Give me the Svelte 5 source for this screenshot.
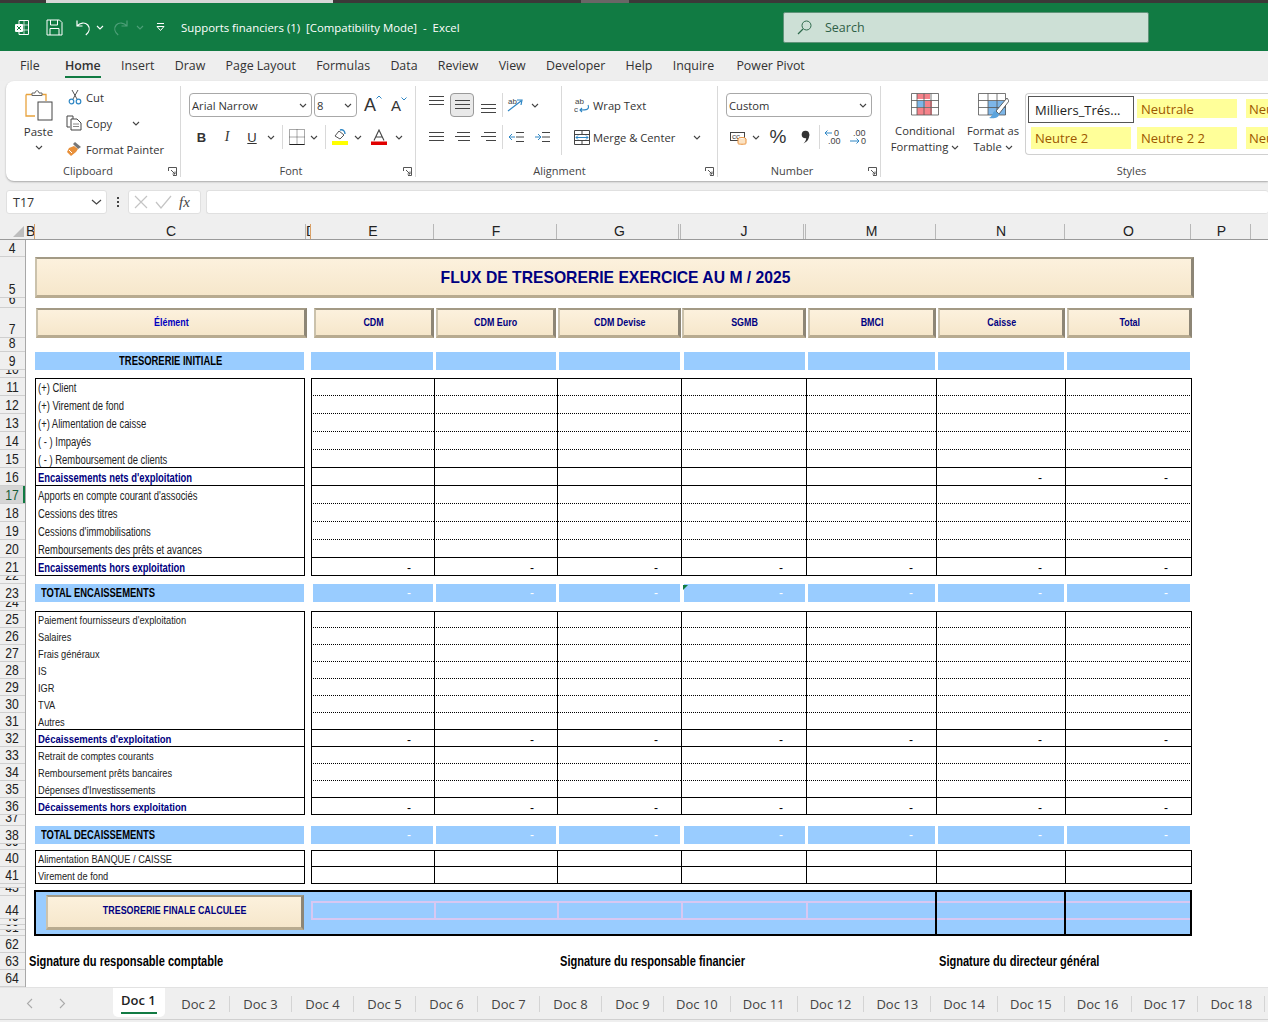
<script>
  const menu = ['File', 'Home', 'Insert', 'Draw', 'Page Layout', 'Formulas', 'Data', 'Review', 'View', 'Developer', 'Help', 'Inquire', 'Power Pivot'];

  const columns = [
    { l: 'B', c: 'hid' }, { l: 'C' }, { l: 'D', c: 'hid' }, { l: 'E' }, { l: 'F' }, { l: 'G', c: 'dbl' },
    { l: 'J', c: 'dbl' }, { l: 'M' }, { l: 'N' }, { l: 'O' }, { l: 'P' }, { l: '', c: 'rest' }
  ];

  // row number, height in px
  const heads = [
    [4, 17], [5, 41], [6, 10], [7, 30], [8, 14], [9, 18], [10, 8],
    [11, 18], [12, 18], [13, 18], [14, 18], [15, 18], [16, 18], [17, 18], [18, 18], [19, 18], [20, 18], [21, 18],
    [22, 8], [23, 18], [24, 9],
    [25, 17], [26, 17], [27, 17], [28, 17], [29, 17], [30, 17], [31, 17], [32, 17], [33, 17], [34, 17], [35, 17], [36, 17],
    [37, 11], [38, 18], [39, 6], [40, 17], [41, 17], [42, 4], [43, 8], [44, 23], [49, 6], [50, 5], [51, 6],
    [62, 17], [63, 17], [64, 17]
  ];

  const values = ['E', 'F', 'G', 'J', 'M', 'N', 'O'];
  const headers = ['CDM', 'CDM Euro', 'CDM Devise', 'SGMB', 'BMCI', 'Caisse', 'Total'];
  const ALL = [0, 1, 2, 3, 4, 5, 6];

  const line = (label, opts = {}) => ({ kind: 'line', h: 18, label, dash: [], line: 'dot', ...opts });

  const content = [
    { kind: 'gap', h: 17 },
    { kind: 'title', h: 41 },
    { kind: 'gap', h: 10 },
    { kind: 'head', h: 30 },
    { kind: 'gap', h: 14 },
    { kind: 'band', h: 18, label: 'TRESORERIE INITIALE', center: true, dash: [] },
    { kind: 'gap', h: 8 },
    line('(+) Client', { first: true }),
    line('(+) Virement de fond'),
    line('(+) Alimentation de caisse'),
    line('( - ) Impayés'),
    line('( - ) Remboursement de clients', { line: 'solid', lblLine: true }),
    line("Encaissements nets d'exploitation", { total: true, dash: [5, 6], line: 'solid', lblLine: true }),
    line("Apports en compte courant d'associés"),
    line('Cessions des titres'),
    line("Cessions d'immobilisations"),
    line('Remboursements des prêts et avances', { line: 'solid', lblLine: true }),
    line('Encaissements hors exploitation', { total: true, dash: ALL, line: 'solid' }),
    { kind: 'gap', h: 8 },
    { kind: 'band', h: 18, label: 'TOTAL ENCAISSEMENTS', dash: ALL, inset: true, flag: true },
    { kind: 'gap', h: 9 },
    ...['Paiement fournisseurs d\'exploitation', 'Salaires', 'Frais généraux', 'IS', 'IGR', 'TVA'].map((label, i) =>
      line(label, { h: 17, small: true, first: i === 0 })),
    line('Autres', { h: 17, small: true, line: 'solid', lblLine: true }),
    line("Décaissements d'exploitation", { h: 17, total: true, small: true, dash: ALL, line: 'solid', lblLine: true }),
    line('Retrait de comptes courants', { h: 17, small: true }),
    line('Remboursement prêts bancaires', { h: 17, small: true }),
    line("Dépenses d'Investissements", { h: 17, small: true, line: 'solid', lblLine: true }),
    line('Décaissements hors exploitation', { h: 17, total: true, small: true, dash: ALL, line: 'solid' }),
    { kind: 'gap', h: 11 },
    { kind: 'band', h: 18, label: 'TOTAL DECAISSEMENTS', dash: ALL },
    { kind: 'gap', h: 6 },
    line('Alimentation BANQUE / CAISSE', { h: 17, small: true, first: true, line: 'solid', lblLine: true }),
    line('Virement de fond', { h: 17, small: true, line: 'solid' }),
    { kind: 'gap', h: 6 },
    { kind: 'final', h: 46 },
    { kind: 'gap', h: 17 },
    { kind: 'signs', h: 17 }
  ];

  const sheets = Array.from({ length: 17 }, (_, i) => 'Doc ' + (i + 2));
</script>

{#snippet chev()}
  <svg class="chev" width="8" height="5" viewBox="0 0 8 5"><path d="M1 1l3 3 3-3" fill="none" stroke="#444" stroke-width="1.1"/></svg>
{/snippet}

{#snippet launcher()}
  <svg class="launcher" width="9" height="9" viewBox="0 0 9 9"><path d="M.5 4V.5H8.500V8.500H5M3 3l4 4M7 4.500V7H4.500" fill="none" stroke="#555"/></svg>
{/snippet}

{#snippet lines(a, b, c)}
  <svg width="15" height="10" viewBox="0 0 15 10"><path d="M{a} .5H15M{b} 4.500H15M{c} 8.500H15" stroke="#444" fill="none"/></svg>
{/snippet}

<div class="window">
  <div class="tabstrip">
    <div class="strip-a"></div>
    <div class="strip-b"></div>
    <div class="strip-c"></div>
  </div>

  <header class="titlebar">
    <svg class="t-xl" width="16" height="17" viewBox="0 0 16 17"><path d="M5 1.500h9.500v14H5z" fill="none" stroke="#fff"/><path d="M10 1.500v14M5 6h9.500M5 11h9.500" stroke="#fff" stroke-width=".7"/><rect x="1" y="5" width="8" height="8" rx="1" fill="#fff"/><path d="M3 7l4 4M7 7l-4 4" stroke="#107c41"/></svg>
    <svg class="t-save" width="17" height="17" viewBox="0 0 17 17"><path d="M1 1h12.500L16 3.500V16H1z" fill="none" stroke="#fff"/><path d="M4.500 1v5h7V1M4 16v-6.500h9V16" fill="none" stroke="#fff"/></svg>
    <svg class="t-undo" width="16" height="17" viewBox="0 0 16 17"><path d="M2 1.500v5.500h5.500M2.200 6.800C5 3.500 10 3 12.800 6c2.500 3 1.500 7-2 10" fill="none" stroke="#fff" stroke-width="1.2"/></svg>
    <svg class="t-ch" width="8" height="5" viewBox="0 0 8 5"><path d="M1 1l3 3 3-3" fill="none" stroke="#fff" stroke-width="1.1"/></svg>
    <svg class="t-redo" width="16" height="17" viewBox="0 0 16 17"><path d="M14 1.500v5.500H8.500M13.800 6.800C11 3.500 6 3 3.200 6c-2.500 3-1.500 7 2 10" fill="none" stroke="#4e9f78" stroke-width="1.2"/></svg>
    <svg class="t-ch dim" width="8" height="5" viewBox="0 0 8 5"><path d="M1 1l3 3 3-3" fill="none" stroke="#4e9f78" stroke-width="1.1"/></svg>
    <svg class="t-qat" width="9" height="8" viewBox="0 0 9 8"><path d="M1 .5h7" stroke="#fff"/><path d="M1 3.500h7L4.500 7.500z" fill="none" stroke="#fff"/></svg>
    <span class="doc-title">Supports financiers (1)  [Compatibility Mode]  -  Excel</span>
    <div class="search">
      <svg width="15" height="15" viewBox="0 0 15 15"><circle cx="9.500" cy="5.500" r="4.500" fill="none" stroke="#2e6a4c"/><path d="M6 9L1 14" stroke="#2e6a4c" stroke-width="1.2"/></svg>
      <span>Search</span>
    </div>
  </header>

  <nav class="menu">
    {#each menu as item}
      <span class="menu-item" class:on={item === 'Home'} class:far={item === 'Power Pivot'}>{item}</span>
    {/each}
  </nav>

  <section class="ribbon">
    <div class="group g-clip">
      <div class="body">
        <div class="paste">
          <svg width="30" height="31" viewBox="0 0 30 31">
            <path d="M2 4.500h20V11M2 4.500V26h9" fill="#fff" stroke="#e8a33d" stroke-width="1.3"/>
            <path d="M8 5V3h3c0-3 4-3 4 0h3v2.500H8z" fill="#fff" stroke="#666"/>
            <rect x="14" y="12" width="14" height="18" fill="#fff" stroke="#444"/>
          </svg>
          <span class="paste-txt">Paste</span>
          {@render chev()}
        </div>
        <div class="tools">
          <div class="tool">
            <svg class="cut" width="14" height="16" viewBox="0 0 14 16"><path d="M4 1l5 9M10 1L5 10" stroke="#555" fill="none"/><circle cx="3.500" cy="12.500" r="2.300" fill="none" stroke="#2e86c4" stroke-width="1.2"/><circle cx="10.500" cy="12.500" r="2.300" fill="none" stroke="#2e86c4" stroke-width="1.2"/></svg>
            <span>Cut</span>
          </div>
          <div class="tool">
            <svg width="16" height="16" viewBox="0 0 16 16"><path d="M4 12H1V1h6v3" fill="none" stroke="#444"/><path d="M5 4h6l4 4v7H5z" fill="#fff" stroke="#444"/><path d="M7 9h6M7 11.500h6" stroke="#888"/></svg>
            <span>Copy</span>
            <span class="copy-ch">{@render chev()}</span>
          </div>
          <div class="tool">
            <svg width="16" height="16" viewBox="0 0 16 16"><path d="M9 1l6 5-3 2-5-5z" fill="#777"/><path d="M8 5L3 7 1 11l4 4 5-4 2-3z" fill="#e8903a"/><path d="M3 9l3 3" stroke="#fff"/></svg>
            <span>Format Painter</span>
          </div>
        </div>
      </div>
      <div class="glabel">Clipboard</div>
      {@render launcher()}
    </div>

    <div class="group g-font">
      <div class="stack pad-font">
        <div class="rrow">
          <div class="select s-font"><span>Arial Narrow</span>{@render chev()}</div>
          <div class="select s-size"><span>8</span>{@render chev()}</div>
          <span class="grow-a">A<svg width="6" height="4" viewBox="0 0 6 4"><path d="M.5 3.500L3 1l2.500 2.500" fill="none" stroke="#2e86c4"/></svg></span>
          <span class="shrink-a">A<svg width="6" height="4" viewBox="0 0 6 4"><path d="M.5 .5L3 3l2.500-2.500" fill="none" stroke="#2e86c4"/></svg></span>
        </div>
        <div class="rrow">
          <span class="ib w25 bold">B</span>
          <span class="ib w26 ital">I</span>
          <span class="ib w24 under">U</span>
          <span class="ib w14">{@render chev()}</span>
          <span class="vsep w8"></span>
          <span class="ib w21"><svg width="16" height="16" viewBox="0 0 16 16"><path d="M.5.5h15v15H.5z" fill="none" stroke="#555" stroke-dasharray="1 1"/><path d="M8 .5v15M.5 8h15" stroke="#555" stroke-dasharray="1 1"/><path d="M.5 15.500h15" stroke="#222"/></svg></span>
          <span class="ib w14">{@render chev()}</span>
          <span class="vsep w8"></span>
          <span class="ib w22"><svg width="17" height="16" viewBox="0 0 17 16"><path d="M3 7l4-5 5 4-4 4z" fill="#fff" stroke="#555"/><path d="M8 1c3-1 5 1 5 4" fill="none" stroke="#2e86c4" stroke-width="1.400"/><rect y="12" width="16" height="4" fill="#ffff00"/></svg></span>
          <span class="ib w14">{@render chev()}</span>
          <span class="ib w27"><svg width="16" height="16" viewBox="0 0 16 16"><path d="M3 11.500L8 1l5 10.500M5 8h6" fill="none" stroke="#444" stroke-width="1.100"/><rect y="12.500" width="16" height="3.500" fill="#e00000"/></svg></span>
          <span class="ib w14">{@render chev()}</span>
        </div>
      </div>
      <div class="glabel">Font</div>
      {@render launcher()}
    </div>

    <div class="group g-align">
      <div class="body">
        <div class="stack pad-align">
          <div class="rrow">
            <span class="ib w26 up">{@render lines(0, 0, 0)}</span>
            <span class="ib w26"><span class="pressed">{@render lines(0, 0, 0)}</span></span>
            <span class="ib w26 down">{@render lines(0, 0, 0)}</span>
            <span class="vsep w2"></span>
            <span class="ib w26"><svg width="18" height="16" viewBox="0 0 18 16"><path d="M1 14L14 4M10 3l5 0-1 5" fill="none" stroke="#2e86c4" stroke-width="1.200"/><text x="1" y="7" class="tiny">ab</text></svg></span>
            <span class="ib w12">{@render chev()}</span>
          </div>
          <div class="rrow">
            <span class="ib w26">{@render lines(0, 0, 0)}</span>
            <span class="ib w26">{@render lines(2, 0, 3)}</span>
            <span class="ib w26">{@render lines(3, 0, 5)}</span>
            <span class="vsep w2"></span>
            <span class="ib w26"><svg width="15" height="12" viewBox="0 0 15 12"><path d="M7 1.500h8M7 6h8M7 10.500h8M0 11.500h0" stroke="#444"/><path d="M6 6H0M3 3L0 6l3 3" fill="none" stroke="#2e86c4"/></svg></span>
            <span class="ib w26"><svg width="15" height="12" viewBox="0 0 15 12"><path d="M7 1.500h8M7 6h8M7 10.500h8" stroke="#444"/><path d="M0 6h6M3 3l3 3-3 3" fill="none" stroke="#2e86c4"/></svg></span>
          </div>
        </div>
        <div class="stack wrapcol">
          <div class="rrow">
            <svg width="16" height="16" viewBox="0 0 16 16"><text x="1" y="7" class="tiny">ab</text><text x="0" y="15" class="tiny">c</text><path d="M14 8c2 5-2 5-8 5M8 11l-2 2 2 2" fill="none" stroke="#2e86c4" stroke-width="1.100"/></svg>
            <span class="lbl-gap">Wrap Text</span>
          </div>
          <div class="rrow">
            <svg width="16" height="15" viewBox="0 0 16 15"><path d="M.5.5h15v14H.5zM.5 4.500h15M.5 10.500h15M8 .5v4M8 10.500v4" fill="none" stroke="#444"/><path d="M2 7.500h12M4 5.500l-2 2 2 2M12 5.500l2 2-2 2" fill="none" stroke="#2e86c4"/></svg>
            <span class="lbl-gap">Merge &amp; Center</span>
            <span class="merge-ch">{@render chev()}</span>
          </div>
        </div>
      </div>
      <div class="glabel">Alignment</div>
      {@render launcher()}
    </div>

    <div class="group g-num">
      <div class="stack pad-num">
        <div class="rrow">
          <div class="select s-num"><span>Custom</span>{@render chev()}</div>
        </div>
        <div class="rrow">
          <span class="ib w24"><svg width="17" height="15" viewBox="0 0 17 15"><rect x=".5" y="2.500" width="14" height="8" fill="#fff" stroke="#444"/><text x="2" y="9" class="tiny">cc</text><ellipse cx="12" cy="9" rx="4" ry="1.500" fill="#fff" stroke="#e8903a"/><path d="M8 9v4.500c0 1 8 1 8 0V9" fill="#fbe3c4" stroke="#e8903a"/></svg></span>
          <span class="ib w12">{@render chev()}</span>
          <span class="ib w32 pct">%</span>
          <span class="ib w22"><svg width="9" height="14" viewBox="0 0 9 14"><circle cx="4.500" cy="4.500" r="3.800" fill="#333"/><path d="M8.300 4.500C8.300 9 6 12 2.500 13.500 5 11 5.500 9 5 7z" fill="#333"/></svg></span>
          <span class="vsep w5"></span>
          <span class="ib w24"><svg width="18" height="16" viewBox="0 0 18 16"><text x="10" y="7" class="dec">0</text><text x="4" y="15" class="dec">.00</text><path d="M8 4H1M3.500 1.500L1 4l2.500 2.500" fill="none" stroke="#2e86c4"/></svg></span>
          <span class="ib w26"><svg width="18" height="16" viewBox="0 0 18 16"><text x="4" y="7" class="dec">.00</text><text x="12" y="15" class="dec">0</text><path d="M1 12h9M7.500 9.500L10 12l-2.500 2.500" fill="none" stroke="#2e86c4"/></svg></span>
        </div>
      </div>
      <div class="glabel">Number</div>
      {@render launcher()}
    </div>

    <div class="group g-styles">
      <div class="body">
        <div class="bigbtn b-cond">
          <div class="bigicon">
            <svg width="28" height="23" viewBox="0 0 28 23">
              <path d="M6 1h13v5H6zM6 15h15v7H6z" fill="#f5828a"/><path d="M6 8h8v6H6z" fill="#7db6e8"/><path d="M14 8h7v6h-7z" fill="#f5828a"/>
              <path d="M.5.5h27v21.500H.5zM.5 7.500h27M.5 14.500h27M6 .5V22M13 .5V22M20 .5V22" fill="none" stroke="#555" stroke-width=".8"/>
            </svg>
          </div>
          <span>Conditional</span>
          <span>Formatting {@render chev()}</span>
        </div>
        <div class="bigbtn b-table">
          <div class="bigicon">
            <svg width="31" height="27" viewBox="0 0 31 27">
              <path d="M10 8h18v14H10z" fill="#7db6e8"/>
              <path d="M.5.5h27v21.500H.5zM.5 7.500h27M.5 14.500h27M10 .5V22M19 .5V22" fill="none" stroke="#555" stroke-width=".8"/>
              <path d="M29 5L18 18l3 3L31 8z" fill="#fff" stroke="#444" stroke-width=".8"/>
              <path d="M17 18c-3 1-1 4-6 7 5 1 10 0 10-4z" fill="#5ba3dc"/>
            </svg>
          </div>
          <span>Format as</span>
          <span>Table {@render chev()}</span>
        </div>
        <div class="gallery">
          <div class="sty current">Milliers_Trés...</div>
          <div class="sty neutral">Neutrale</div>
          <div class="sty neutral">Neu</div>
          <div class="sty neutral">Neutre 2</div>
          <div class="sty neutral">Neutre 2 2</div>
          <div class="sty neutral">Neu</div>
        </div>
      </div>
      <div class="glabel">Styles</div>
    </div>
  </section>

  <div class="formula">
    <div class="namebox"><span>T17</span><svg width="11" height="6" viewBox="0 0 11 6"><path d="M1 1l4.500 4L10 1" fill="none" stroke="#444" stroke-width="1.200"/></svg></div>
    <div class="dots"><i></i><i></i><i></i></div>
    <div class="fxbox">
      <svg width="14" height="14" viewBox="0 0 14 14"><path d="M1 1l12 12M13 1L1 13" stroke="#c4c4c4" stroke-width="1.200"/></svg>
      <svg width="17" height="14" viewBox="0 0 17 14"><path d="M1 7l5 6L16 1" fill="none" stroke="#c4c4c4" stroke-width="1.200"/></svg>
      <span class="fx">fx</span>
    </div>
    <div class="input"></div>
  </div>

  <div class="colheads">
    <div class="corner"><svg width="11" height="11" viewBox="0 0 11 11"><path d="M11 0v11H0z" fill="#bdbdbd"/></svg></div>
    {#each columns as col}
      <div class="col {col.c ?? ''}">{col.l}</div>
    {/each}
  </div>

  <div class="sheet">
    <div class="rowheads">
      {#each heads as [n, h]}
        <div class="rh" class:sel={n === 17} style:height="{h}px"><span>{n}</span></div>
      {/each}
    </div>

    <div class="rows">
      {#each content as r}
        {#if r.kind === 'gap'}
          <div style:height="{r.h}px"></div>
        {:else if r.kind === 'title'}
          <div class="row" style:height="{r.h}px">
            <div class="bevel banner">FLUX DE TRESORERIE EXERCICE AU M / 2025</div>
          </div>
        {:else if r.kind === 'head'}
          <div class="row" style:height="{r.h}px">
            <div class="bevel hlabel"><span class="nw">Élément</span></div>
            {#each headers as h, i}
              <div class="bevel hcell" style:grid-column={i + 4}><span class="nw">{h}</span></div>
            {/each}
          </div>
        {:else if r.kind === 'band'}
          <div class="row" style:height="{r.h}px">
            <div class="band-label" class:center={r.center}><span class="nw" class:left={!r.center}>{r.label}</span></div>
            {#each values as v, i}
              <div class="band-cell" class:inset={r.inset && i === 0} style:grid-column={i + 4}>
                {#if r.flag && v === 'J'}<span class="flag"></span>{/if}
                {#if r.dash.includes(i)}<span>-</span>{/if}
              </div>
            {/each}
          </div>
        {:else if r.kind === 'line'}
          <div class="row" style:height="{r.h}px">
            <div class="label" class:first={r.first} class:ruled-end={r.line === 'solid'} class:total={r.total} class:small={r.small}><span class="nw left">{r.label}</span></div>
            {#each values as v, i}
              <div class="cell {r.line}" class:first={r.first} style:grid-column={i + 4}>{r.dash.includes(i) ? '-' : ''}</div>
            {/each}
          </div>
        {:else if r.kind === 'final'}
          <div class="final">
            <div class="bevel final-btn"><span class="nw">TRESORERIE FINALE CALCULEE</span></div>
            <div class="final-grid">
              {#each values as v, i}
                <div class="fcell" class:thick={i >= 5}></div>
              {/each}
            </div>
          </div>
        {:else if r.kind === 'signs'}
          <div class="signs" style:height="{r.h}px">
            <span class="s1"><span class="nw left">Signature du responsable comptable</span></span>
            <span class="s2"><span class="nw left">Signature du responsable financier</span></span>
            <span class="s3"><span class="nw left">Signature du directeur général</span></span>
          </div>
        {/if}
      {/each}
    </div>
  </div>

  <footer class="tabs">
    <div class="arrows">
      <svg width="7" height="11" viewBox="0 0 7 11"><path d="M6 1L1.500 5.500 6 10" fill="none" stroke="#aaa" stroke-width="1.100"/></svg>
      <svg width="7" height="11" viewBox="0 0 7 11"><path d="M1 1l4.500 4.500L1 10" fill="none" stroke="#aaa" stroke-width="1.100"/></svg>
    </div>
    <div class="tab active"><span>Doc 1</span></div>
    {#each sheets as s}
      <div class="tab" class:long={s.length > 5}>{s}</div>
    {/each}
  </footer>
</div>

<style>
  :global(body) {
    margin: 0;
    background: #efefef;
  }

  .window {
    width: 1268px;
    height: 1022px;
    overflow: hidden;
    font-family: "Open Sans", "Noto Sans", sans-serif;
    color: #333;
    display: flex;
    flex-direction: column;
  }

  /* browser chrome sliver above the title bar */
  .tabstrip {
    height: 3px;
    background: #3b3838;
    display: flex;
    flex: none;
  }
  .strip-a { width: 287px; margin-left: 46px; background: #d8d8d8; }
  .strip-b { width: 48px; margin-left: 248px; background: #6a6666; }
  .strip-c { flex: 1; }

  .titlebar {
    height: 48px;
    flex: none;
    background: #117b43;
    display: flex;
    align-items: center;
    color: #fff;
  }
  .t-xl { margin-left: 14px; }
  .t-save { margin-left: 16px; }
  .t-undo { margin-left: 12px; }
  .t-ch { margin-left: 5px; }
  .t-redo { margin-left: 9px; }
  .t-ch.dim { margin-left: 7px; }
  .t-qat { margin-left: 12px; }
  .doc-title {
    margin-left: 16px;
    font-size: 11.4px;
    white-space: pre;
  }
  .search {
    margin-left: auto;
    margin-right: 119px;
    width: 366px;
    height: 31px;
    box-sizing: border-box;
    background: #cde0d6;
    border: 1px solid #5f9379;
    border-radius: 2px;
    display: flex;
    align-items: center;
    gap: 13px;
    padding-left: 13px;
    color: #2f5f47;
    font-size: 12.5px;
  }

  .menu {
    height: 30px;
    flex: none;
    background: #eeeeee;
    display: flex;
    align-items: center;
    gap: 20.3px;
    padding-left: 20px;
    font-size: 12.4px;
  }
  .menu-item { position: relative; line-height: 30px; }
  .menu-item.on { font-weight: 600; margin-left: 5px; }
  .menu-item.on::after {
    content: "";
    position: absolute;
    left: 0;
    right: 0;
    bottom: 3px;
    height: 2px;
    background: #117b43;
  }
  .menu-item.far { margin-left: 2px; }

  .ribbon {
    height: 100px;
    flex: none;
    margin-left: 6px;
    box-sizing: border-box;
    padding: 5px 0 4px;
    background: #fff;
    border-radius: 8px 0 0 8px;
    box-shadow: 0 1px 2px rgba(0, 0, 0, .3);
    display: flex;
    font-size: 11.2px;
  }
  .group {
    position: relative;
    display: flex;
    flex-direction: column;
    flex: none;
    box-sizing: border-box;
    border-right: 1px solid #d9d9d9;
  }
  .body { display: flex; height: 76px; flex: none; }
  .glabel {
    height: 13px;
    line-height: 13px;
    margin-top: 2px;
    padding-right: 14px;
    text-align: center;
    font-size: 11px;
    color: #444;
    white-space: nowrap;
  }
  .g-clip .glabel { padding-right: 10px; }
  .g-styles .glabel { padding: 0 0 0 36px; }
  .launcher { position: absolute; right: 3px; bottom: 1px; }
  .g-clip { width: 175px; }
  .g-font { width: 235px; }
  .g-align { width: 302px; }
  .g-num { width: 163px; }
  .g-styles { flex: 1; border-right: 0; }

  .paste {
    width: 47px;
    margin-left: 9px;
    padding-top: 4px;
    display: flex;
    flex-direction: column;
    align-items: center;
    font-size: 11.5px;
  }
  .paste-txt { margin-top: 2px; line-height: 17px; }
  .paste .chev { margin-top: 5px; }
  .tools { margin-left: 4px; margin-top: -2px; }
  .tool {
    height: 26px;
    display: flex;
    align-items: center;
    gap: 4px;
    white-space: nowrap;
  }
  .tool svg { flex: none; }
  .tool .cut { margin: 0 0 0 2px; }
  .copy-ch { margin-left: 16px; display: flex; }

  .stack { display: flex; flex-direction: column; gap: 8px; padding-top: 7px; }
  .rrow { display: flex; align-items: center; height: 24px; white-space: nowrap; }
  .pad-font { padding-left: 8px; height: 69px; flex: none; }
  .select {
    height: 24px;
    box-sizing: border-box;
    border: 1px solid #a8a8a8;
    border-radius: 4px;
    display: flex;
    align-items: center;
    justify-content: space-between;
    padding: 0 4px 0 2px;
    font-size: 11.2px;
  }
  .s-font { width: 123px; }
  .s-size { width: 43px; margin-left: 2px; }
  .s-num { width: 146px; }
  .grow-a, .shrink-a { display: inline-flex; align-items: flex-start; font-family: "Liberation Sans", sans-serif; }
  .grow-a { font-size: 18px; margin-left: 7px; width: 27px; }
  .shrink-a { font-size: 15px; }
  .ib {
    display: flex;
    align-items: center;
    justify-content: center;
    flex: none;
    height: 24px;
  }
  .w12 { width: 12px; }
  .w14 { width: 14px; }
  .w21 { width: 21px; }
  .w22 { width: 22px; }
  .w24 { width: 24px; }
  .w25 { width: 25px; }
  .w26 { width: 26px; }
  .w27 { width: 27px; }
  .w32 { width: 32px; }
  .vsep { height: 24px; flex: none; position: relative; }
  .vsep::after {
    content: "";
    position: absolute;
    left: 50%;
    top: 0;
    bottom: 0;
    border-left: 1px solid #d9d9d9;
  }
  .w2 { width: 2px; }
  .w5 { width: 5px; }
  .w8 { width: 8px; }
  .bold { font-family: "Liberation Sans", sans-serif; font-weight: 700; font-size: 13px; }
  .ital { font-family: "Liberation Serif", serif; font-style: italic; font-size: 14px; }
  .under { font-family: "Liberation Sans", sans-serif; text-decoration: underline; font-size: 13px; }
  .tiny { font: 8px "Liberation Sans", sans-serif; fill: #444; }
  .dec { font: 9px "Liberation Sans", sans-serif; fill: #444; }
  .pct { font-size: 19px; font-family: "Liberation Sans", sans-serif; font-weight: 400; }
  .up { padding-bottom: 8px; box-sizing: border-box; }
  .down { padding-top: 8px; box-sizing: border-box; }
  .pressed {
    width: 24px;
    height: 24px;
    box-sizing: border-box;
    border: 1px solid #9a9a9a;
    border-radius: 4px;
    background: #e9e9e9;
    display: flex;
    align-items: center;
    justify-content: center;
  }

  .pad-align {
    padding-left: 7px;
    width: 146px;
    box-sizing: border-box;
    border-right: 1px solid #d9d9d9;
    height: 69px;
  }
  .wrapcol { padding-left: 12px; }
  .lbl-gap { margin-left: 3px; }
  .merge-ch { margin-left: 18px; display: flex; }
  .pad-num { padding-left: 8px; height: 69px; flex: none; }
  .bigbtn {
    display: flex;
    flex-direction: column;
    align-items: center;
    padding-top: 7px;
    line-height: 16px;
    white-space: nowrap;
    box-sizing: border-box;
    flex: none;
  }
  .bigicon { height: 30px; flex: none; }
  .bigbtn .chev { vertical-align: 1px; }
  .b-cond { width: 72px; margin-left: 8px; }
  .b-table { width: 64px; }
  .gallery {
    margin-top: 7px;
    flex: 1;
    height: 62px;
    box-sizing: border-box;
    border: 1px solid #d0d0d0;
    border-right: 0;
    border-radius: 4px 0 0 4px;
    padding: 2px 0 0 2px;
    display: grid;
    grid-template-columns: 106px 112px 1fr;
    grid-template-rows: 27px 29px;
    font-size: 13px;
    overflow: hidden;
  }
  .sty {
    display: flex;
    align-items: center;
    white-space: nowrap;
    box-sizing: border-box;
  }
  .current { border: 1px solid #555; padding-left: 6px; color: #222; }
  .neutral { background: #ffff99; color: #9c5700; margin: 3px 0 5px 3px; padding-left: 4px; width: 100px; }
  .sty:nth-child(n+4) { margin: 4px 0 3px 3px; }
  .sty:nth-child(3n) { margin-left: 0; padding-left: 3px; }

  .formula {
    margin-top: 9px;
    height: 24px;
    flex: none;
    padding-left: 6px;
    display: flex;
  }
  .namebox, .fxbox, .input {
    background: #fff;
    border: 1px solid #e0e0e0;
    border-radius: 3px;
    box-sizing: border-box;
    display: flex;
    align-items: center;
  }
  .namebox {
    width: 101px;
    justify-content: space-between;
    padding: 0 4px 0 6px;
    font-size: 12.5px;
  }
  .dots {
    width: 21px;
    display: flex;
    flex-direction: column;
    align-items: center;
    justify-content: center;
    gap: 2px;
  }
  .dots i { width: 2px; height: 2px; background: #444; display: block; }
  .fxbox { width: 73px; padding-left: 5px; gap: 7px; }
  .fx { font: italic 15px "Liberation Serif", serif; color: #444; }
  .input { flex: 1; margin-left: 5px; border-right: 0; }

  .colheads {
    margin-top: 10px;
    height: 15px;
    flex: none;
    display: grid;
    grid-template-columns: 26px 9px 271px 5px 123px 123px 124px 125px 130px 129px 126px 60px 1fr;
    border-bottom: 1px solid #9a9a9a;
    font: 14px "Liberation Sans", sans-serif;
    color: #222;
  }
  .corner { display: flex; justify-content: flex-end; align-items: flex-end; padding: 0 2px 2px 0; }
  .col {
    text-align: center;
    line-height: 15px;
    padding-left: 2px;
    overflow: hidden;
    border-right: 1px solid #b8b8b8;
    box-sizing: border-box;
  }
  .col.hid { border-right-color: #d9a066; text-align: left; padding-left: 0; }
  .col.dbl { border-right: 3px double #b8b8b8; padding-left: 4px; }
  .col.rest { border-right: 0; }

  .sheet {
    height: 747px;
    flex: none;
    display: flex;
    background: #fff;
    overflow: hidden;
  }
  .rowheads {
    width: 26px;
    flex: none;
    background: #efefef;
    border-right: 1px solid #a8a8a8;
    box-sizing: border-box;
    font: 14.5px "Liberation Sans", sans-serif;
    color: #222;
  }
  .rh {
    box-sizing: border-box;
    border-bottom: 1px solid #cfcfcf;
    overflow: hidden;
    display: flex;
    align-items: flex-end;
    justify-content: center;
    line-height: 16px;
  }
  .rh span { display: block; flex: none; transform: scaleX(.84); }
  .rh.sel {
    background: #d5d5d5;
    color: #185c37;
    box-shadow: inset -2px 0 0 #117b43;
  }

  .rows {
    flex: 1;
    font-family: "Liberation Sans", sans-serif;
    color: #000;
  }
  .row {
    display: grid;
    grid-template-columns: 9px 270px 6px 123px 123px 124px 125px 130px 129px 127px;
    grid-auto-rows: 100%;
  }

  /* no Arial Narrow here: condense the Arial metric font instead */
  .nw {
    display: inline-block;
    white-space: nowrap;
    transform: scaleX(.81);
  }
  .nw.left { transform-origin: left center; }

  .bevel {
    box-sizing: border-box;
    background: linear-gradient(#fcf1dd, #f6e7cb);
    border-style: solid;
    border-width: 2px 3px 3px 2px;
    border-color: #a39a85 #8d8676 #b8ab90 #cbc2ac;
    display: flex;
    align-items: center;
    justify-content: center;
    color: #000080;
    font-weight: 700;
    white-space: nowrap;
  }
  .banner {
    grid-column: 2 / -1;
    margin-right: -2px;
    font-size: 15.7px;
    padding: 1px 0 0 3px;
  }
  .hlabel {
    grid-column: 2;
    margin: 0 -2px 0 1px;
    font-size: 11px;
    color: #0000c0;
    padding-bottom: 1px;
  }
  .hcell {
    margin: 0 0 0 2px;
    font-size: 11px;
    grid-row: 1;
    padding: 0 0 1px 1px;
  }
  .hcell:nth-child(2) { margin-left: 3px; }
  .hcell:nth-child(3) { margin-right: 1px; }
  .hcell:nth-child(4), .hcell:nth-child(5) { margin-left: 1px; }

  .band-label {
    grid-column: 2;
    background: #99ccff;
    margin-right: 1px;
    font-weight: 700;
    font-size: 12px;
    line-height: 18px;
    padding-left: 6px;
    white-space: nowrap;
  }
  .band-label .nw { transform: scaleX(.785); }
  .band-label.center { text-align: center; padding-left: 2px; }
  .band-cell {
    background: #99ccff;
    margin: 0 1px 0 2px;
    grid-row: 1;
    position: relative;
    display: flex;
    justify-content: flex-end;
    align-items: center;
    padding-right: 22px;
    color: #fff;
    font-size: 12px;
  }
  .band-cell:nth-child(2) { margin-left: 0; }
  .band-cell.inset { margin-left: 2px; }
  .band-cell:nth-child(5) { margin-left: 3px; }
  .band-cell:last-child { margin-right: 2px; }
  .flag {
    position: absolute;
    top: 1px;
    left: -1px;
    border-style: solid;
    border-width: 5px 5px 0 0;
    border-color: #107c41 transparent transparent transparent;
  }

  .label {
    grid-column: 2;
    box-sizing: border-box;
    border-left: 1px solid #000;
    border-right: 1px solid #000;
    padding-left: 2px;
    font-size: 12px;
    line-height: 20px;
    white-space: nowrap;
    overflow: hidden;
    color: #222;
  }
  .label .nw { transform: scaleX(.785); }
  .label.first { border-top: 1px solid #000; line-height: 18px; }
  .label.ruled-end { border-bottom: 1px solid #000; }
  .label.total { font-weight: 700; color: #000080; }
  .label.small { font-size: 11px; line-height: 18px; }
  .label.small.first { line-height: 17px; }
  .label.small .nw { transform: scaleX(.84); }
  .label.small.total .nw { transform: scaleX(.865); }
  .cell {
    box-sizing: border-box;
    border-left: 1px solid #000;
    grid-row: 1;
    text-align: right;
    padding-right: 23px;
    font-size: 12px;
    line-height: 20px;
    overflow: hidden;
  }
  .cell:last-child { border-right: 1px solid #000; }
  .cell.first { border-top: 1px solid #000; }
  .cell.dot { border-bottom: 1px dotted #000; }
  .cell.solid { border-bottom: 1px solid #000; }

  .final {
    margin-left: 8px;
    width: 1158px;
    height: 46px;
    box-sizing: border-box;
    border: 2px solid #000;
    background: #99ccff;
    display: flex;
    align-items: flex-start;
    position: relative;
  }
  .final-btn {
    width: 258px;
    height: 35px;
    margin: 3px 0 0 10px;
    font-size: 11px;
    flex: none;
    padding-bottom: 5px;
  }
  .final-grid {
    position: absolute;
    left: 275px;
    right: 0;
    top: 9px;
    height: 19px;
    display: grid;
    grid-template-columns: 123px 123px 124px 125px 130px 129px 1fr;
    border-top: 2px solid #d8c8f2;
    border-bottom: 2px solid #d8c8f2;
    box-sizing: border-box;
  }
  .fcell { border-left: 2px solid #d8c8f2; }
  .fcell.thick { border-left: 0; position: relative; }
  .fcell.thick::before {
    content: "";
    position: absolute;
    left: -1px;
    top: -11px;
    bottom: -16px;
    width: 2px;
    background: #000;
  }

  .signs {
    font-weight: 700;
    font-size: 14px;
    line-height: 17px;
    white-space: nowrap;
    display: grid;
    grid-template-columns: 3px 531px 379px 1fr;
  }
  .signs .nw { transform: scaleX(.79); }
  .s1 { grid-column: 2; }
  .s2 { grid-column: 3; }
  .s3 { grid-column: 4; }

  .tabs {
    height: 33px;
    flex: none;
    box-sizing: border-box;
    background: #efefef;
    border-top: 1px solid #e2e2e2;
    border-bottom: 1px solid #d0d0d0;
    display: flex;
    align-items: center;
    font-size: 13px;
    color: #444;
    white-space: nowrap;
  }
  .arrows { width: 113px; flex: none; box-sizing: border-box; padding-left: 26px; display: flex; gap: 26px; }
  .tab {
    box-sizing: border-box;
    width: 62px;
    text-align: center;
    height: 16px;
    line-height: 16px;
    border-right: 1px solid #d4d4d4;
    flex: none;
  }
  .tab.long { width: 66.8px; }
  .tab.active {
    height: 29px;
    padding: 0 8px;
    background: #fff;
    border: 0;
    border-radius: 0 0 5px 5px;
    color: #222;
    font-weight: 600;
    width: 52px;
    text-align: left;
    align-self: flex-start;
    line-height: 24px;
    margin-right: 3px;
  }
  .tab.active span { display: block; border-bottom: 2px solid #117b43; height: 24px; }
</style>
